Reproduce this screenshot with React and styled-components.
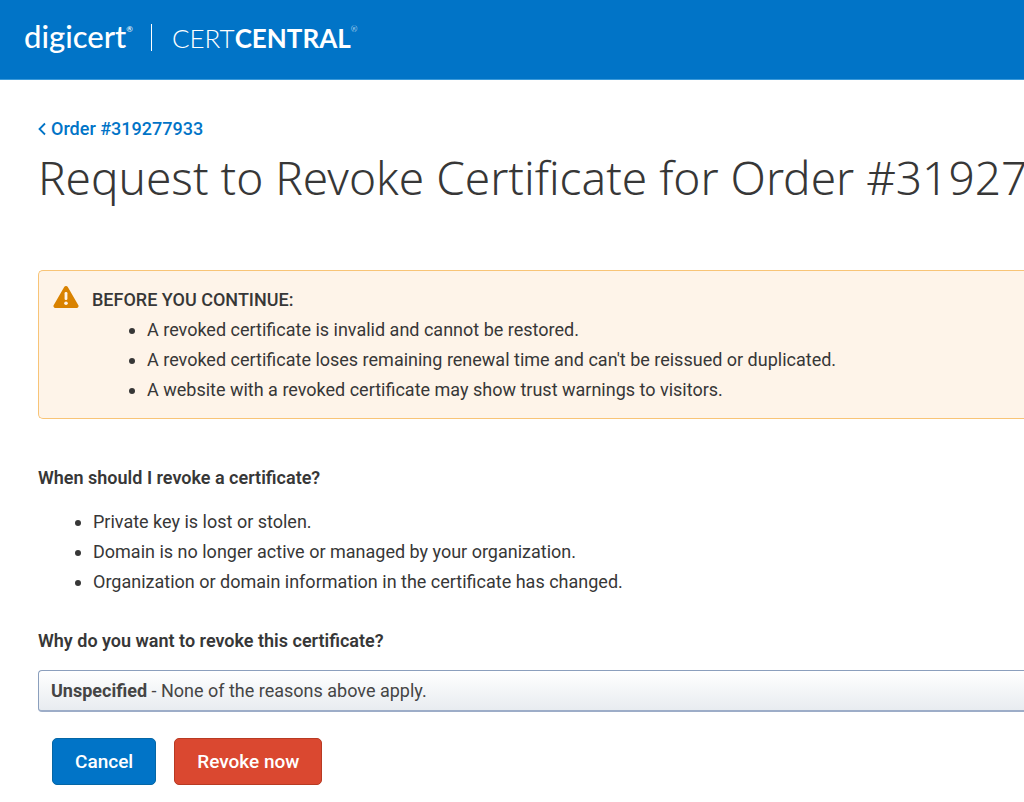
import styled, { createGlobalStyle } from "styled-components";
import { useState } from "react";

const REASONS = [
  { value: "unspecified", name: "Unspecified", text: "None of the reasons above apply." },
  { value: "key", name: "Key compromise", text: "My private key is lost or stolen." },
  { value: "cessation", name: "Cessation of operation", text: "I no longer use the domain." },
  { value: "affiliation", name: "Affiliation changed", text: "My organization information changed." },
];

function App() {
  const [reason, setReason] = useState("unspecified");
  const current = REASONS.find((item) => item.value === reason);

  return (
    <>
      <GlobalStyle />
      <Header>
        <Brand>
          digicert<Mark>®</Mark>
        </Brand>
        <Divider />
        <Product>
          CERT<b>CENTRAL</b>
          <Mark>®</Mark>
        </Product>
      </Header>
      <Main>
        <BackLink href="#order">
          <Chevron viewBox="0 0 8 14" aria-hidden="true">
            <path d="M7 1.5 1.5 7 7 12.5" />
          </Chevron>
          Order #319277933
        </BackLink>
        <Title>Request to Revoke Certificate for Order #319277933</Title>

        <Alert>
          <WarningIcon viewBox="0 0 26 22" aria-hidden="true">
            <path
              d="M11.2 1.1a2.1 2.1 0 0 1 3.6 0l10.4 17.8a2 2 0 0 1-1.8 3.1H2.6a2 2 0 0 1-1.8-3.1z"
              fill="#d98200"
            />
            <rect x="11.6" y="6" width="2.8" height="8" rx="1.2" fill="#fef4e9" />
            <circle cx="13" cy="17.2" r="1.8" fill="#fef4e9" />
          </WarningIcon>
          <div>
            <AlertTitle>BEFORE YOU CONTINUE:</AlertTitle>
            <List>
              <li>A revoked certificate is invalid and cannot be restored.</li>
              <li>A revoked certificate loses remaining renewal time and can't be reissued or duplicated.</li>
              <li>A website with a revoked certificate may show trust warnings to visitors.</li>
            </List>
          </div>
        </Alert>

        <Question>When should I revoke a certificate?</Question>
        <List>
          <li>Private key is lost or stolen.</li>
          <li>Domain is no longer active or managed by your organization.</li>
          <li>Organization or domain information in the certificate has changed.</li>
        </List>

        <Label htmlFor="reason">Why do you want to revoke this certificate?</Label>
        <SelectBox>
          <Select id="reason" value={reason} onChange={(e) => setReason(e.target.value)}>
            {REASONS.map((item) => (
              <option key={item.value} value={item.value}>
                {item.name} - {item.text}
              </option>
            ))}
          </Select>
          <Selected aria-hidden="true">
            <b>{current.name}</b> - {current.text}
          </Selected>
        </SelectBox>

        <Actions>
          <Button type="button">Cancel</Button>
          <Button type="button" $danger>
            Revoke now
          </Button>
        </Actions>
      </Main>
    </>
  );
}

const GlobalStyle = createGlobalStyle`
  * {
    box-sizing: border-box;
  }
  body {
    margin: 0;
    background: #fff;
    color: #373737;
    font: 400 18px/30px Roboto, sans-serif;
  }
`;

const Header = styled.header`
  display: flex;
  align-items: center;
  height: 80px;
  padding: 0 24px 4px;
  background: #0174c7;
  border-bottom: 1px solid #3b9ada;
  color: #fff;
`;

const Brand = styled.div`
  padding-bottom: 4px;
  font: 500 31px/40px Lato, sans-serif;
`;

const Mark = styled.sup`
  font-size: 8px;
  line-height: 8px;
  vertical-align: 16px;
`;

const Divider = styled.span`
  width: 1px;
  height: 27px;
  margin: 0 20px 0 18px;
  background: #fff;
`;

const Product = styled.div`
  font: 300 26px/40px Lato, sans-serif;
  b {
    font-weight: 700;
  }
`;

const Main = styled.main`
  padding: 34px 0 17px 38px;
`;

const BackLink = styled.a`
  display: inline-flex;
  align-items: center;
  gap: 5px;
  color: #0174c7;
  font-weight: 500;
  text-decoration: none;
`;

const Chevron = styled.svg`
  width: 8px;
  height: 14px;
  fill: none;
  stroke: currentColor;
  stroke-width: 1.8;
`;

const Title = styled.h1`
  margin: 2px 0 63px;
  font: 300 46px/60px "Noto Sans", sans-serif;
  white-space: nowrap;
  overflow: hidden;
`;

const Alert = styled.section`
  display: flex;
  align-items: flex-start;
  gap: 13px;
  padding: 14px 14px 13px;
  background: #fef4e9;
  border: 1px solid #f8c477;
  border-right: 0;
  border-radius: 5px 0 0 5px;
`;

const WarningIcon = styled.svg`
  flex: none;
  width: 26px;
  height: 22px;
  margin-top: 1px;
`;

const AlertTitle = styled.div`
  font-weight: 500;
`;

const List = styled.ul`
  margin: 0;
  padding-left: 55px;
`;

const Question = styled.h2`
  margin: 44px 0 14px;
  font: inherit;
  font-weight: 600;
`;

const Label = styled.label`
  display: block;
  margin: 29px 0 14px;
  font-weight: 600;
`;

const SelectBox = styled.div`
  display: grid;
  > * {
    grid-area: 1 / 1;
  }
`;

const Select = styled.select`
  width: 100%;
  height: 42px;
  padding: 0 12px;
  appearance: none;
  border: 1px solid #8b9fbd;
  border-bottom: 2px solid #9dadc8;
  border-right: 0;
  border-radius: 4px 0 0 4px;
  background: linear-gradient(#fff, #e8ecf0);
  color: transparent;
  font: inherit;
  option {
    color: #373737;
  }
`;

const Selected = styled.span`
  align-self: center;
  padding-left: 13px;
  color: #454545;
  pointer-events: none;
`;

const Actions = styled.div`
  display: flex;
  gap: 18px;
  padding: 26px 14px 0;
`;

const Button = styled.button`
  height: 47px;
  padding: 0 22px;
  border: 1px solid ${(props) => (props.$danger ? "#b83a23" : "#0566a5")};
  border-radius: 5px;
  background: ${(props) => (props.$danger ? "#da4830" : "#0174c7")};
  color: #fff;
  font: 500 19px/24px Roboto, sans-serif;
  cursor: pointer;
`;

export default App;
